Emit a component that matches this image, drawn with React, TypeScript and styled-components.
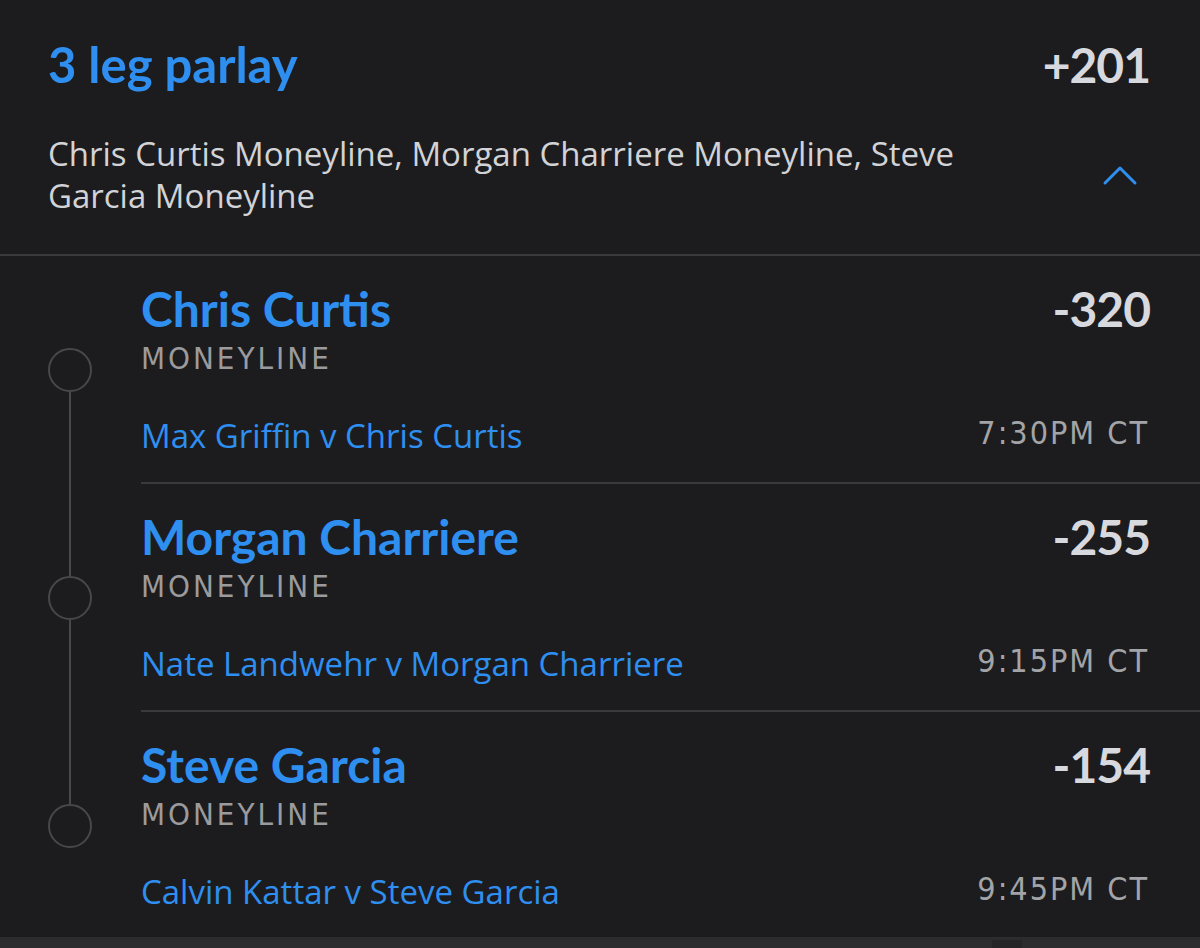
import React from 'react';
import styled, { createGlobalStyle } from 'styled-components';

type Leg = {
    name: string;
    odds: string;
    market: string;
    matchup: string;
    time: string;
};

const legs: Leg[] = [
    { name: 'Chris Curtis', odds: '-320', market: 'MONEYLINE', matchup: 'Max Griffin v Chris Curtis', time: '7:30PM CT' },
    { name: 'Morgan Charriere', odds: '-255', market: 'MONEYLINE', matchup: 'Nate Landwehr v Morgan Charriere', time: '9:15PM CT' },
    { name: 'Steve Garcia', odds: '-154', market: 'MONEYLINE', matchup: 'Calvin Kattar v Steve Garcia', time: '9:45PM CT' },
];

const App: React.FC = () => {
    return (
        <>
            <GlobalStyle />
            <Card>
                <Header>
                    <TitleRow>
                        <Title>3 leg parlay</Title>
                        <Odds>+201</Odds>
                    </TitleRow>
                    <SummaryRow>
                        <Summary>
                            Chris Curtis Moneyline, Morgan Charriere Moneyline, Steve Garcia Moneyline
                        </Summary>
                        <Chevron width="36" height="22" viewBox="0 0 36 22">
                            <polyline
                                points="3,19 18,4 33,19"
                                fill="none"
                                stroke="#2f8ff0"
                                strokeWidth="3"
                                strokeLinecap="round"
                                strokeLinejoin="round"
                            />
                        </Chevron>
                    </SummaryRow>
                </Header>

                <LegList>
                    {legs.map((leg, index) => (
                        <LegRow key={index}>
                            <Rail>
                                <Segment visible={index > 0} />
                                <Dot />
                                <Segment visible={index < legs.length - 1} grow />
                            </Rail>
                            <LegBody last={index === legs.length - 1}>
                                <TitleRow>
                                    <LegName>{leg.name}</LegName>
                                    <Odds>{leg.odds}</Odds>
                                </TitleRow>
                                <Market>{leg.market}</Market>
                                <MatchRow>
                                    <Matchup>{leg.matchup}</Matchup>
                                    <Time>{leg.time}</Time>
                                </MatchRow>
                            </LegBody>
                        </LegRow>
                    ))}
                </LegList>

                <BottomBar>
                    <Handle />
                </BottomBar>
            </Card>
        </>
    );
};

const GlobalStyle = createGlobalStyle`
    html, body {
        margin: 0;
        padding: 0;
        background: #1c1c1e;
    }
    * {
        box-sizing: border-box;
    }
`;

const Card = styled.div`
    width: 1200px;
    min-height: 948px;
    background: #1c1c1e;
    display: flex;
    flex-direction: column;
`;

const Header = styled.div`
    padding: 35px 50px 37px 48px;
    border-bottom: 2px solid #3a3a3c;
`;

const TitleRow = styled.div`
    display: flex;
    justify-content: space-between;
    align-items: baseline;
`;

const Title = styled.h1`
    margin: 0;
    font-family: Lato, 'Open Sans', sans-serif;
    font-weight: 700;
    font-size: 49px;
    line-height: 58px;
    color: #2f8ff0;
`;

const Odds = styled.span`
    font-family: Lato, 'Open Sans', sans-serif;
    font-weight: 700;
    font-size: 48px;
    line-height: 58px;
    letter-spacing: -1px;
    color: #d7d9de;
`;

const SummaryRow = styled.div`
    margin-top: 39px;
    display: flex;
    align-items: center;
    justify-content: space-between;
`;

const Summary = styled.p`
    margin: 0;
    width: 990px;
    font-family: 'Open Sans', sans-serif;
    font-size: 33px;
    line-height: 42px;
    color: #d2d3d6;
`;

const Chevron = styled.svg`
    margin-right: 12px;
    display: block;
`;

const LegList = styled.div`
    display: flex;
    flex-direction: column;
`;

const LegRow = styled.div`
    display: flex;
`;

const Rail = styled.div`
    width: 141px;
    flex-shrink: 0;
    padding-left: 48px;
    display: flex;
    flex-direction: column;
`;

const Segment = styled.div<{ visible: boolean; grow?: boolean }>`
    width: 2px;
    margin-left: 21px;
    height: ${p => (p.grow ? 'auto' : '92px')};
    flex: ${p => (p.grow ? 1 : 'none')};
    background: ${p => (p.visible ? '#48484a' : 'transparent')};
`;

const Dot = styled.div`
    width: 44px;
    height: 44px;
    border-radius: 50%;
    border: 2px solid #48484a;
`;

const LegBody = styled.div<{ last: boolean }>`
    flex: 1;
    padding: 24px 50px ${p => (p.last ? '22px' : '25px')} 0;
    border-bottom: 2px solid ${p => (p.last ? 'transparent' : '#3a3a3c')};
`;

const LegName = styled.h2`
    margin: 0;
    font-family: Lato, 'Open Sans', sans-serif;
    font-weight: 700;
    font-size: 48px;
    line-height: 58px;
    color: #2f8ff0;
`;

const Market = styled.div`
    margin-top: 3px;
    font-family: 'Liberation Sans Narrow', 'DejaVu Sans Condensed', 'Roboto Condensed', Roboto, sans-serif;
    font-stretch: condensed;
    font-size: 31px;
    line-height: 34px;
    letter-spacing: 3px;
    color: #9b9b9d;
`;

const MatchRow = styled.div`
    margin-top: 40px;
    display: flex;
    justify-content: space-between;
    align-items: flex-start;
`;

const Matchup = styled.span`
    font-family: 'Open Sans', sans-serif;
    font-size: 33px;
    line-height: 42px;
    color: #2f8ff0;
`;

const Time = styled.span`
    margin-top: 1px;
    margin-right: 1px;
    font-family: 'Liberation Sans Narrow', 'DejaVu Sans Condensed', 'Roboto Condensed', Roboto, sans-serif;
    font-stretch: condensed;
    font-size: 32px;
    line-height: 34px;
    letter-spacing: 2px;
    color: #a3a4a7;
`;

const BottomBar = styled.div`
    flex: 1;
    min-height: 8px;
    background: #2c2c2e;
    display: flex;
    align-items: flex-start;
    padding-top: 3px;
    padding-left: 992px;
`;

const Handle = styled.div`
    width: 30px;
    height: 8px;
    background: #252527;
`;

export default App;
